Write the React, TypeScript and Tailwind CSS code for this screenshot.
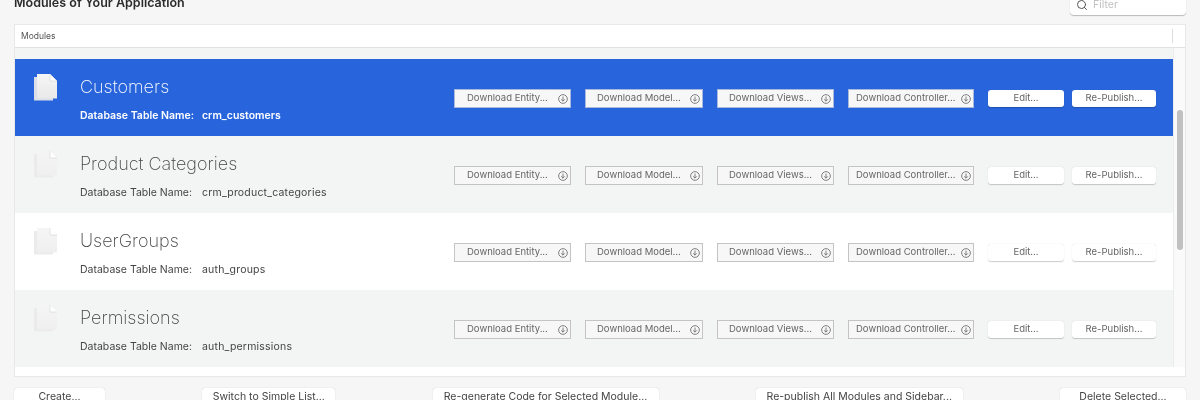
import { Search } from "lucide-react";

const modules = [
  { name: "Customers", table: "crm_customers" },
  { name: "Product Categories", table: "crm_product_categories" },
  { name: "UserGroups", table: "auth_groups" },
  { name: "Permissions", table: "auth_permissions" },
];

const downloads = [
  { label: "Download Entity...", box: "w-[117px] pl-[12px]" },
  { label: "Download Model...", box: "w-[118px] pl-[11px]" },
  { label: "Download Views...", box: "w-[117px] pl-[11px]" },
  { label: "Download Controller...", box: "w-[126px] pl-[7px]" },
];

const footerButtons = [
  { label: "Create...", width: "w-[91px]" },
  { label: "Switch to Simple List...", width: "w-[133px]" },
  { label: "Re-generate Code for Selected Module...", width: "w-[226px]" },
  { label: "Re-publish All Modules and Sidebar...", width: "w-[207px]" },
  { label: "Delete Selected...", width: "w-[126px]" },
];

// Stacked page icon, drawn as in the macOS file list
function PagesIcon({ selected }: { selected: boolean }) {
  const id = selected ? "page-on" : "page-off";
  return (
    <svg width="23" height="27" viewBox="0 0 23 27" className="shrink-0">
      <defs>
        <linearGradient id={id} x1="0" y1="0" x2="0" y2="1">
          <stop offset="0" stopColor={selected ? "#f6f6f6" : "#f5f5f5"} />
          <stop offset="1" stopColor={selected ? "#e9e9e9" : "#efefef"} />
        </linearGradient>
      </defs>
      <path d="M0 3h19v23.5H0z" fill={selected ? "#dcdfe8" : "#ebebeb"} />
      <path d="M3 0h13l7 7v17.5H3z" fill={`url(#${id})`} />
      <path d="M16 0l7 7h-7z" fill="#ffffff" />
      <path d="M16 0v7h7" fill="none" stroke="#d4d4d4" strokeWidth="0.6" />
    </svg>
  );
}

function DownloadIcon() {
  return (
    <svg width="10" height="10" viewBox="0 0 11 11" fill="none" stroke="#666" strokeWidth="0.9">
      <circle cx="5.5" cy="5.5" r="4.8" />
      <path d="M5.5 2.8v5M3.5 5.9l2 2 2-2" />
    </svg>
  );
}

function ModuleRow({ name, table, index }: { name: string; table: string; index: number }) {
  const selected = index === 0;
  const bg = selected ? "bg-[#2864dc]" : index % 2 === 1 ? "bg-[#f3f5f4]" : "bg-white";

  return (
    <div className={`flex h-[77px] items-center pl-[19px] ${bg}`}>
      <div className="mb-[21px] w-[46px]">
        <PagesIcon selected={selected} />
      </div>
      <div className={`mt-[2px] flex w-[374px] flex-col ${selected ? "text-white" : "text-[#444]"}`}>
        <div className={`text-[18px] leading-[24px] font-extralight ${selected ? "text-white" : "text-[#444]"}`}>{name}</div>
        <div className={`mt-[10px] flex text-[10.5px] leading-[14px] ${selected ? "font-semibold" : "font-normal"}`}>
          <span className="w-[122px]">Database Table Name:</span>
          <span className={selected ? "" : "tracking-[0.2px]"}>{table}</span>
        </div>
      </div>
      <div className="mt-[2px] flex gap-[14px]">
        {downloads.map((d) => (
          <div
            key={d.label}
            className={`flex h-[19px] ${d.box} items-center justify-between border bg-[#f7f7f7] pr-[2px] text-[9.5px] whitespace-nowrap text-[#666] ${selected ? "border-[#a9b9dc]" : "border-[#c4c4c4]"}`}
          >
            <span>{d.label}</span>
            <DownloadIcon />
          </div>
        ))}
      </div>
      <div className="mt-[2px] ml-[14px] flex h-[17px] w-[76px] items-center justify-center rounded-[3px] bg-white text-[9.5px] text-[#666] shadow-[0_0.5px_1px_rgba(0,0,0,0.2)]">
        Edit...
      </div>
      <div className="mt-[2px] ml-[8px] flex h-[17px] w-[84px] items-center justify-center rounded-[3px] bg-white text-[9.5px] text-[#666] shadow-[0_0.5px_1px_rgba(0,0,0,0.2)]">
        Re-Publish...
      </div>
    </div>
  );
}

export default function App() {
  return (
    <div className="h-[400px] w-[1200px] overflow-hidden bg-[#f6f6f6] px-[14px] font-['Inter',sans-serif] blur-[0.35px]">
      {/* Title bar, cut off by the top of the picture */}
      <div className="mt-[-8px] flex h-[32px] items-center justify-between">
        <div className="mt-[-9px] text-[12.5px] font-semibold text-[#2b2b2b]">Modules of Your Application</div>
        <div className="mt-[-6px] flex h-[20px] w-[116px] items-center gap-[5px] rounded-[4px] bg-white pl-[6px] text-[10.5px] text-[#c2c2c2] shadow-[0_0.5px_1px_rgba(0,0,0,0.25)]">
          <Search size={12} className="text-[#555]" />
          Filter
        </div>
      </div>

      <div className="h-[353px] overflow-hidden border border-[#e8e8e8] bg-white">
        <div className="flex h-[23px] items-center border-b border-[#e2e2e2] pl-[6px] text-[8.5px] text-[#555]">
          <span className="flex-1">Modules</span>
          <span className="mr-[12px] h-[14px] border-l border-[#ddd]" />
        </div>
        <div className="flex">
          <div className="w-[1158px]">
            <div className="h-[11px] bg-[#f3f5f4]" />
            {modules.map((m, i) => (
              <ModuleRow key={m.name} name={m.name} table={m.table} index={i} />
            ))}
          </div>
          <div className="flex-1 border-l border-[#ececec] bg-[#fafafa] pt-[62px] pl-[3px]">
            <div className="h-[140px] w-[6px] rounded-full bg-[#c1c1c1]" />
          </div>
        </div>
      </div>

      <div className="mt-[11px] flex justify-between">
        {footerButtons.map((b) => (
          <div
            key={b.label}
            className={`flex h-[18px] ${b.width} items-center justify-center rounded-[3px] bg-white text-[10.5px] whitespace-nowrap text-[#444] shadow-[0_0.5px_1px_rgba(0,0,0,0.25)]`}
          >
            {b.label}
          </div>
        ))}
      </div>
    </div>
  );
}
